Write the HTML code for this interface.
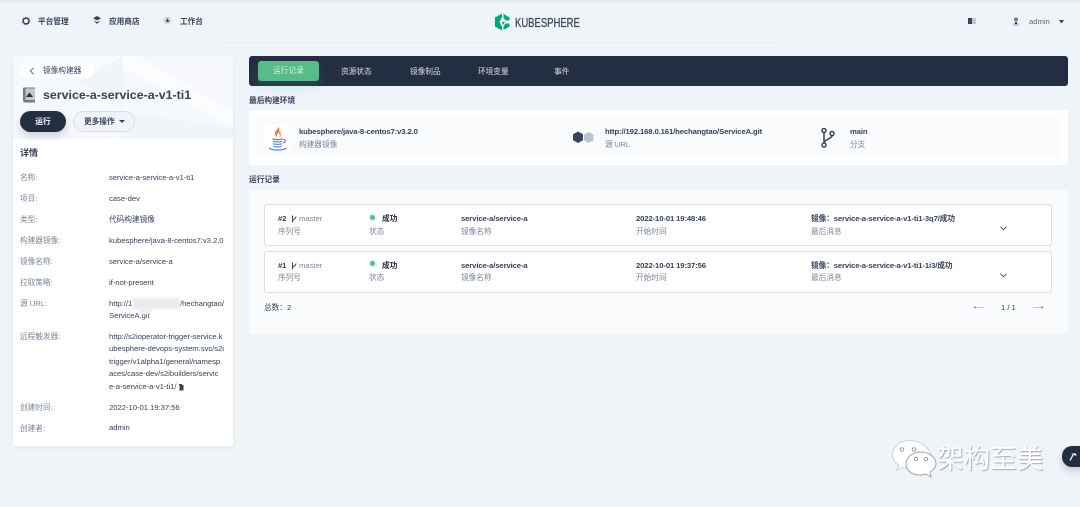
<!DOCTYPE html>
<html lang="zh"><head><meta charset="utf-8"><title>KubeSphere</title>
<style>
html,body{margin:0;padding:0}
body{width:1080px;height:507px;overflow:hidden;background:#eff4f9;position:relative;font-family:"Liberation Sans","Noto Sans CJK SC",sans-serif;color:#36435c;font-size:7.7px}
#w{position:absolute;left:0;top:0;width:1080px;height:507px;filter:blur(.3px)}
.t{position:absolute;white-space:nowrap;line-height:12px;font-size:7.7px;letter-spacing:-.04px}
.b{font-weight:700;color:#242e42;letter-spacing:-.12px}
.g{color:#79879c}
.l{color:#79879c;left:20px}
.v{color:#36435c;left:109px}
.box{position:absolute;background:#fff;border-radius:3px}
svg{position:absolute;overflow:visible}
</style></head><body><div id="w">
<div style="position:absolute;left:0;top:0;width:1080px;height:2px;background:#e6ebf2"></div>
<div style="position:absolute;left:0;top:42px;width:1000px;height:1px;background:linear-gradient(90deg,#eff4f9,#e6ebf1 30%,#e6ebf1 70%,#eff4f9)"></div>

<!-- top nav -->
<svg style="left:21px;top:16px" width="10" height="10" viewBox="0 0 10 10"><circle cx="5" cy="5" r="2.800" fill="none" stroke="#36435c" stroke-width="1.300"/><circle cx="5" cy="5" r="3.800" fill="none" stroke="#36435c" stroke-width=".7" stroke-dasharray="1.200 1.200"/></svg>
<span class="t" style="left:38px;top:16px;font-weight:700;color:#36435c">平台管理</span>
<svg style="left:92px;top:15px" width="10" height="10" viewBox="0 0 10 10"><path d="M5 1L9 3.200 5 5.400 1 3.200Z" fill="#36435c"/><path d="M1.500 5.200L5 7.100 8.500 5.200 5 9Z" fill="#36435c"/></svg>
<span class="t" style="left:109px;top:16px;font-weight:700;color:#36435c">应用商店</span>
<svg style="left:163px;top:16px" width="9" height="9" viewBox="0 0 9 9"><circle cx="4.500" cy="4.500" r="4" fill="#d3dae3"/><path d="M4.500 2L6.300 6H2.700Z" fill="#36435c"/></svg>
<span class="t" style="left:180px;top:16px;font-weight:700;color:#36435c">工作台</span>

<!-- logo -->
<svg style="left:494px;top:13px" width="17" height="18" viewBox="0 0 17 18"><path d="M8 0.500L1 4.500V13.500L8 17.500L8 14L5.500 9L8 4Z" fill="#00aa72"/><path d="M9.500 1L15.500 4.500V7.500H11.500L9.500 4.500Z" fill="#00aa72"/><path d="M9.500 17L15.500 13.500V10.500H11.500L9.500 13.500Z" fill="#00aa72"/><path d="M8 9L11 8.800 9 12Z" fill="#00aa72"/></svg>
<span style="position:absolute;left:515px;top:14px;font-size:13px;line-height:18px;color:#3d4a5c;font-family:'Liberation Sans',sans-serif;transform:scaleX(.73);transform-origin:0 0;-webkit-text-stroke:.3px #3d4a5c;white-space:nowrap">KUBESPHERE</span>

<!-- top right -->
<div style="position:absolute;left:968px;top:18px;width:4px;height:6px;background:#36435c"></div>
<div style="position:absolute;left:972px;top:18px;width:4px;height:6px;background:#c1c9d1"></div>
<svg style="left:1012px;top:17px" width="8" height="10" viewBox="0 0 8 10"><circle cx="4" cy="2.500" r="2" fill="#6f7d90"/><path d="M1 6H7V9H1Z" fill="#c1c9d1"/><path d="M3 5H5V7H3Z" fill="#36435c"/></svg>
<span class="t" style="left:1029px;top:16px;color:#5b6a80">admin</span>
<svg style="left:1058px;top:20px" width="7" height="4" viewBox="0 0 7 4"><path d="M1 0H6L3.500 3.500Z" fill="#36435c"/></svg>

<!-- sidebar -->
<div class="box" style="left:13px;top:56px;width:220px;height:390px;box-shadow:0 2px 6px rgba(36,46,66,.05)"></div>
<div style="position:absolute;left:13px;top:56px;width:220px;height:83px;background:#f6f8fb;border-radius:3px 3px 0 0;overflow:hidden">
<svg style="left:0;top:0" width="220" height="83" viewBox="0 0 220 83"><path d="M110 0H125L220 56V72L110 12Z" fill="#fbfcfd"/><path d="M110 0L65 25 110 52Z" fill="#f1f4f8"/><path d="M110 56L220 72V83H110Z" fill="#f1f4f8"/><path d="M0 0H110L65 25Z" fill="#f8fafc"/></svg></div>
<div style="position:absolute;left:20px;top:63px;width:74px;height:15px;background:#fff;border-radius:8px"></div>
<svg style="left:29px;top:67px" width="6" height="8" viewBox="0 0 6 8"><path d="M4.500 .8L1.500 4 4.500 7.200" fill="none" stroke="#329dce" stroke-width="1.200"/></svg>
<span class="t" style="left:43px;top:65px;color:#36435c">镜像构建器</span>
<svg style="left:23px;top:87px" width="13" height="16" viewBox="0 0 13 16"><path d="M0 1.500Q0 .5 1 .5H12V15.500H2Q0 15.500 0 13Z" fill="#6f7d90"/><path d="M2.500 1.500H12V13H2.500Z" fill="#c1c9d1"/><path d="M6.500 5.500L10 10H3Z" fill="#242e42"/></svg>
<span class="t" style="left:43px;top:87px;font-size:12.4px;line-height:17px;font-weight:700;color:#36435c;letter-spacing:0">service-a-service-a-v1-ti1</span>
<div style="position:absolute;left:20px;top:111px;width:46px;height:21px;background:#242e42;border-radius:11px;box-shadow:0 4px 8px rgba(36,46,66,.2);color:#fff;text-align:center;line-height:21px;font-size:7.7px;font-weight:700">运行</div>
<div style="position:absolute;left:73px;top:111px;width:60px;height:19px;background:#eff4f9;border:1px solid #d8dee5;border-radius:11px"></div>
<span class="t" style="left:84px;top:116px;font-weight:700">更多操作</span>
<svg style="left:119px;top:120px" width="6" height="3" viewBox="0 0 6 3"><path d="M0 0H6L3 3Z" fill="#36435c"/></svg>
<span class="t" style="left:20px;top:147px;font-size:9px;font-weight:700;color:#36435c">详情</span>

<span class="t l" style="top:172px">名称:</span><span class="t v" style="top:172px">service-a-service-a-v1-ti1</span>
<span class="t l" style="top:193px">项目:</span><span class="t v" style="top:193px">case-dev</span>
<span class="t l" style="top:214px">类型:</span><span class="t v" style="top:214px">代码构建镜像</span>
<span class="t l" style="top:235px">构建器镜像:</span><span class="t v" style="top:235px">kubesphere/java-8-centos7:v3.2.0</span>
<span class="t l" style="top:256px">镜像名称:</span><span class="t v" style="top:256px">service-a/service-a</span>
<span class="t l" style="top:277px">拉取策略:</span><span class="t v" style="top:277px">if-not-present</span>
<span class="t l" style="top:298px">源 URL:</span><span class="t v" style="top:298px">http://1</span><span class="t v" style="left:180px;top:298px">/hechangtao/</span>
<span class="t v" style="top:310px">ServiceA.git</span>
<div style="position:absolute;left:133px;top:298px;width:47px;height:11px;background:#e9ebee;filter:blur(1px)"></div>
<div style="position:absolute;left:138px;top:308px;width:15px;height:6px;background:#f0f1f3;filter:blur(1px)"></div>
<span class="t l" style="top:331px">远程触发器:</span>
<span class="t v" style="top:331px">http://s2ioperator-trigger-service.k</span>
<span class="t v" style="top:343px">ubesphere-devops-system.svc/s2i</span>
<span class="t v" style="top:356px">trigger/v1alpha1/general/namesp</span>
<span class="t v" style="top:368px">aces/case-dev/s2ibuilders/servic</span>
<span class="t v" style="top:381px">e-a-service-a-v1-ti1/</span>
<svg style="left:178px;top:383px" width="6" height="8" viewBox="0 0 6 8"><path d="M1 1H4V2H5.500V7.500H1.500V2H1Z" fill="#36435c"/></svg>
<span class="t l" style="top:402px">创建时间:</span><span class="t v" style="top:402px">2022-10-01 19:37:56</span>
<span class="t l" style="top:423px">创建者:</span><span class="t v" style="top:422px">admin</span>

<!-- tabs -->
<div style="position:absolute;left:249px;top:56px;width:819px;height:30px;background:#242e42;border-radius:3px"></div>
<div style="position:absolute;left:258px;top:61px;width:61px;height:20px;background:#55bc8a;border-radius:3px;box-shadow:0 6px 10px rgba(85,188,138,.2);color:#dff3e9;text-align:center;line-height:20px;font-size:7.7px">运行记录</div>
<span class="t" style="left:341px;top:66px;color:#d8dee5">资源状态</span>
<span class="t" style="left:410px;top:66px;color:#d8dee5">镜像制品</span>
<span class="t" style="left:478px;top:66px;color:#d8dee5">环境变量</span>
<span class="t" style="left:554px;top:66px;color:#d8dee5">事件</span>

<span class="t b" style="left:249px;top:95px;color:#36435c;letter-spacing:0">最后构建环境</span>
<div class="box" style="left:249px;top:110px;width:819px;height:55px"></div>
<div style="position:absolute;left:257px;top:117px;width:803px;height:41px;background:#f9fbfd;border-radius:3px"></div>
<div style="position:absolute;left:265px;top:125px;width:25px;height:25px;background:#fff"></div>
<svg style="left:265px;top:125px" width="25" height="27" viewBox="0 0 25 27"><path d="M13.500 1C14.500 3.500 10 5.500 10 8.500C10 10 11.500 11.500 12 13C11.500 10.500 12.300 8.800 13.500 7.300C14.500 6 14.800 4 13.500 1Z" fill="#e8703a"/><path d="M15.800 4.500C14.200 6.500 13.800 8 14.600 9.500C15.100 10.500 14.800 11.500 14.200 12.800C15.800 11.500 16.200 10 15.500 8.700C15 7.700 15 6.300 15.800 4.500Z" fill="#e8703a"/><path d="M7.500 13.800C10.500 14.800 15.500 14.800 18 13.800M8 16.300C10.500 17 15 17 17 16.300M8 18.800C10.500 19.500 15 19.500 17 18.800M8.500 21.300C11 22 14.500 22 16.500 21.300M4 23C8 25.800 17 25.800 21.500 23M18.200 14.500C21 14.300 21 17.500 18 18" fill="none" stroke="#4f82c3" stroke-width="1.100"/></svg>
<span class="t b" style="left:299px;top:126px;color:#36435c">kubesphere/java-8-centos7:v3.2.0</span>
<span class="t g" style="left:299px;top:139px">构建器镜像</span>
<svg style="left:572px;top:131px" width="22" height="13" viewBox="0 0 22 13"><path d="M6 0.500L11 3.200V9.200L6 12L1 9.200V3.200Z" fill="#36435c"/><path d="M16.500 1L21.500 3.700V9.200L16.500 12L12 9.200V3.700Z" fill="#b9c4cf"/></svg>
<span class="t b" style="left:605px;top:126px;color:#36435c">http://192.168.0.161/hechangtao/ServiceA.git</span>
<span class="t g" style="left:605px;top:139px">源 URL</span>
<svg style="left:820px;top:127px" width="16" height="22" viewBox="0 0 16 22"><g fill="none" stroke="#36435c" stroke-width="1.500"><circle cx="4" cy="3.500" r="2"/><circle cx="12" cy="6.500" r="2"/><circle cx="4" cy="18" r="2"/><path d="M4 5.500V16M12 8.500C12 12 5 11.500 4 16"/></g></svg>
<span class="t b" style="left:850px;top:126px;color:#36435c">main</span>
<span class="t g" style="left:850px;top:139px">分支</span>

<span class="t b" style="left:249px;top:174px;color:#36435c;letter-spacing:0">运行记录</span>
<div style="position:absolute;left:249px;top:190px;width:819px;height:144px;background:#f9fbfd;border-radius:3px"></div>

<div style="position:absolute;left:264px;top:204px;width:786px;height:40px;background:#fff;border:1px solid #d8dee5;border-radius:3px"></div>
<div style="position:absolute;left:264px;top:251px;width:786px;height:40px;background:#fff;border:1px solid #d8dee5;border-radius:3px"></div>

<span class="t b" style="left:278px;top:213px;color:#36435c">#2</span>
<svg style="left:291px;top:215px" width="6" height="8" viewBox="0 0 6 8"><path d="M1.500 .5V7.500M5 1.500C5 4 2 4 1.500 6" fill="none" stroke="#36435c" stroke-width="1"/></svg>
<span class="t g" style="left:299px;top:213px">master</span>
<span class="t g" style="left:278px;top:226px">序列号</span>
<div style="position:absolute;left:369px;top:213px;width:8px;height:8px;background:#e9f6ef;border-radius:2px"></div>
<div style="position:absolute;left:370px;top:215px;width:5px;height:5px;background:#55bc8a;border-radius:50%"></div>
<span class="t b" style="left:382px;top:213px;letter-spacing:0">成功</span>
<span class="t g" style="left:369px;top:226px">状态</span>
<span class="t b" style="left:461px;top:213px;color:#36435c">service-a/service-a</span>
<span class="t g" style="left:461px;top:226px">镜像名称</span>
<span class="t b" style="left:636px;top:213px;color:#36435c">2022-10-01 19:48:46</span>
<span class="t g" style="left:636px;top:226px">开始时间</span>
<span class="t b" style="left:811px;top:213px;color:#36435c">镜像：service-a-service-a-v1-ti1-3q7/成功</span>
<span class="t g" style="left:811px;top:226px">最后消息</span>
<svg style="left:1000px;top:226px" width="7" height="5" viewBox="0 0 7 5"><path d="M.5 .8L3.500 3.800 6.500 .8" fill="none" stroke="#36435c" stroke-width=".9"/></svg>

<span class="t b" style="left:278px;top:260px;color:#36435c">#1</span>
<svg style="left:291px;top:262px" width="6" height="8" viewBox="0 0 6 8"><path d="M1.500 .5V7.500M5 1.500C5 4 2 4 1.500 6" fill="none" stroke="#36435c" stroke-width="1"/></svg>
<span class="t g" style="left:299px;top:260px">master</span>
<span class="t g" style="left:278px;top:272px">序列号</span>
<div style="position:absolute;left:369px;top:260px;width:8px;height:8px;background:#e9f6ef;border-radius:2px"></div>
<div style="position:absolute;left:370px;top:261px;width:5px;height:5px;background:#55bc8a;border-radius:50%"></div>
<span class="t b" style="left:382px;top:260px;letter-spacing:0">成功</span>
<span class="t g" style="left:369px;top:272px">状态</span>
<span class="t b" style="left:461px;top:260px;color:#36435c">service-a/service-a</span>
<span class="t g" style="left:461px;top:272px">镜像名称</span>
<span class="t b" style="left:636px;top:260px;color:#36435c">2022-10-01 19:37:56</span>
<span class="t g" style="left:636px;top:272px">开始时间</span>
<span class="t b" style="left:811px;top:260px;color:#36435c">镜像：service-a-service-a-v1-ti1-1i3/成功</span>
<span class="t g" style="left:811px;top:272px">最后消息</span>
<svg style="left:1000px;top:273px" width="7" height="5" viewBox="0 0 7 5"><path d="M.5 .8L3.500 3.800 6.500 .8" fill="none" stroke="#36435c" stroke-width=".9"/></svg>

<span class="t" style="left:264px;top:302px;color:#36435c">总数：2</span>
<svg style="left:973px;top:304px" width="12" height="7" viewBox="0 0 12 7"><path d="M11 3.500H1" stroke="#a5b0bf" stroke-width=".7"/><path d="M.5 3.500L2.500 2V5Z" fill="#79879c"/></svg>
<span class="t" style="left:1001px;top:302px;color:#36435c">1 / 1</span>
<svg style="left:1032px;top:304px" width="12" height="7" viewBox="0 0 12 7"><path d="M1 3.500H11" stroke="#a5b0bf" stroke-width=".7"/><path d="M11.500 3.500L9.500 2V5Z" fill="#79879c"/></svg>

<!-- watermark -->
<svg style="left:891px;top:439px" width="46" height="38" viewBox="0 0 46 38"><path d="M19 1.500C9.500 1.500 1.500 7.500 1.500 15.500C1.500 20 4 24 8 26.500L5.500 31L12 28.500C14 29 16 29.500 18 29.500L40 16C37 7 28 1.500 19 1.500Z" fill="#fff" stroke="#c9ccd0" stroke-width=".8"/><path d="M30 13C21 13 15 19 15 25C15 31.500 21 36 29 36C31 36 33 35.500 35 35L40 38L39 33C42.500 31 45 28.500 45 25C45 19 38.500 13 30 13Z" fill="#fff" stroke="#a3a6aa" stroke-width="1"/><circle cx="11" cy="10.500" r="1.800" fill="#fff" stroke="#9a9da1"/><circle cx="23" cy="10.500" r="1.800" fill="#fff" stroke="#9a9da1"/><circle cx="25" cy="20" r="1.700" fill="#fff" stroke="#9a9da1"/><circle cx="35" cy="20" r="1.700" fill="#fff" stroke="#9a9da1"/></svg>
<span style="position:absolute;left:937px;top:444px;font-size:26.6px;line-height:30px;color:#fff;white-space:nowrap;font-family:'Liberation Sans','Noto Sans CJK SC',sans-serif;text-shadow:1px 1px 1px #a9acb0">架构至美</span>
<div style="position:absolute;left:1062px;top:446px;width:30px;height:21px;background:#242e42;border-radius:10px;box-shadow:0 4px 8px rgba(36,46,66,.2)"></div>
<svg style="left:1068px;top:451px" width="10" height="11" viewBox="0 0 10 11"><path d="M2 9.500L5.500 3" stroke="#fff" stroke-width="1.200"/><path d="M3 2.500L8 2.500 8.500 5Z" fill="#fff"/></svg>
</div></body></html>
